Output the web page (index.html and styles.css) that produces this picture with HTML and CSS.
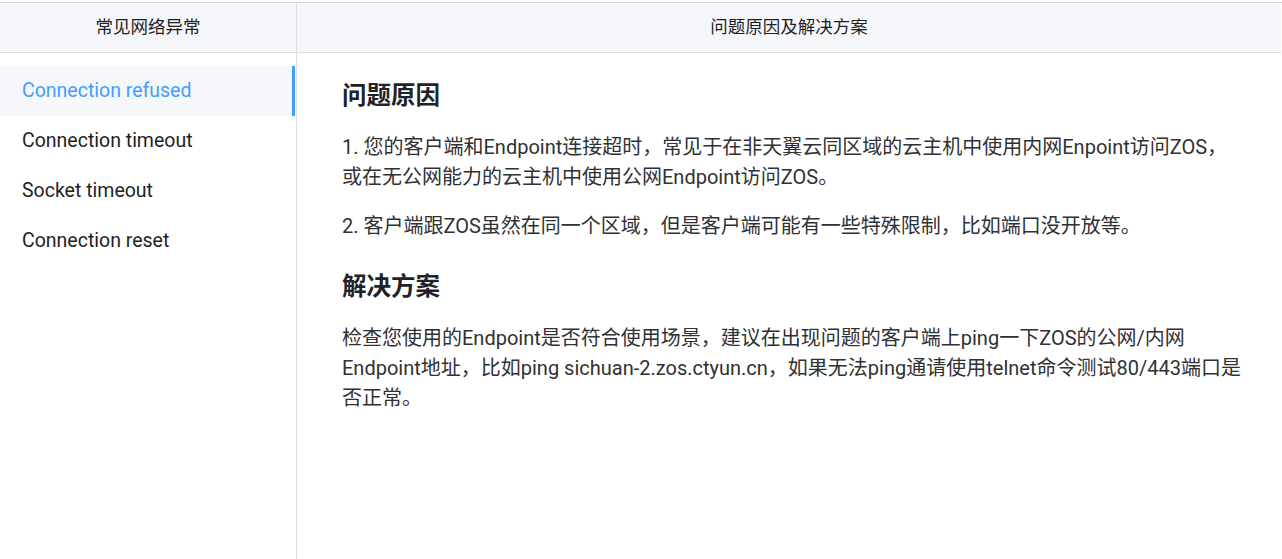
FILE: index.html
```html
<!DOCTYPE html>
<html lang="zh-CN">
<head>
    <meta charset="UTF-8">
    <title>常见网络异常</title>
    <link rel="stylesheet" href="styles.css">
</head>
<body>
    <div class="page">
        <div class="side">
            <div class="head">常见网络异常</div>
            <ul class="menu">
                <li class="menu-item active">Connection refused</li>
                <li class="menu-item">Connection timeout</li>
                <li class="menu-item">Socket timeout</li>
                <li class="menu-item">Connection reset</li>
            </ul>
        </div>
        <div class="main">
            <div class="head">问题原因及解决方案</div>
            <div class="article">
                <h2>问题原因</h2>
                <p>1. 您的客户端和Endpoint连接超时，常见于在非天翼云同区域的云主机中使用内网Enpoint访问ZOS，或在无公网能力的云主机中使用公网Endpoint访问ZOS。</p>
                <p>2. 客户端跟ZOS虽然在同一个区域，但是客户端可能有一些特殊限制，比如端口没开放等。</p>
                <h2 class="second">解决方案</h2>
                <p>检查您使用的Endpoint是否符合使用场景，建议在出现问题的客户端上ping一下ZOS的公网/内网Endpoint地址，比如ping sichuan-2.zos.ctyun.cn，如果无法ping通请使用telnet命令测试80/443端口是否正常。</p>
            </div>
        </div>
    </div>
</body>
</html>
```

FILE: styles.css
```css
body {
    margin: 0;
    font-family: "Segoe UI", Roboto, "Noto Sans CJK SC", sans-serif;
    color: #303133;
    background: #fff;
}

.page {
    margin-top: 2px;
    border-top: 1px solid #d3d3d8;
    display: flex;
    height: 556px;
}

.head {
    height: 49px;
    line-height: 49px;
    background: #f5f6fa;
    border-bottom: 1px solid #dcdde3;
    text-align: center;
    font-size: 17.5px;
    color: #1f1f1f;
}

.side {
    width: 296px;
    border-right: 1px solid #dcdde3;
    flex-shrink: 0;
}

.menu {
    list-style: none;
    margin: 0;
    padding: 13px 0 0 0;
}

.menu-item {
    height: 50px;
    line-height: 50px;
    padding-left: 22px;
    margin-right: 1px;
    font-size: 19.5px;
    color: #1f1f1f;
    border-right: 3px solid transparent;
}

.menu-item.active {
    background: #f5f7fa;
    color: #409eff;
    border-right-color: #409eff;
}

.main {
    flex: 1;
    margin-right: 1px;
}

.article {
    padding: 25px 40px 0 45px;
}

.article h2 {
    margin: 0 0 18px 0;
    font-size: 24.5px;
    line-height: 36px;
    font-weight: bold;
    color: #1f2329;
}

.article h2.second {
    margin-top: 28px;
}

.article p {
    margin: 0 0 19px 0;
    font-size: 20px;
    line-height: 30px;
}
```
